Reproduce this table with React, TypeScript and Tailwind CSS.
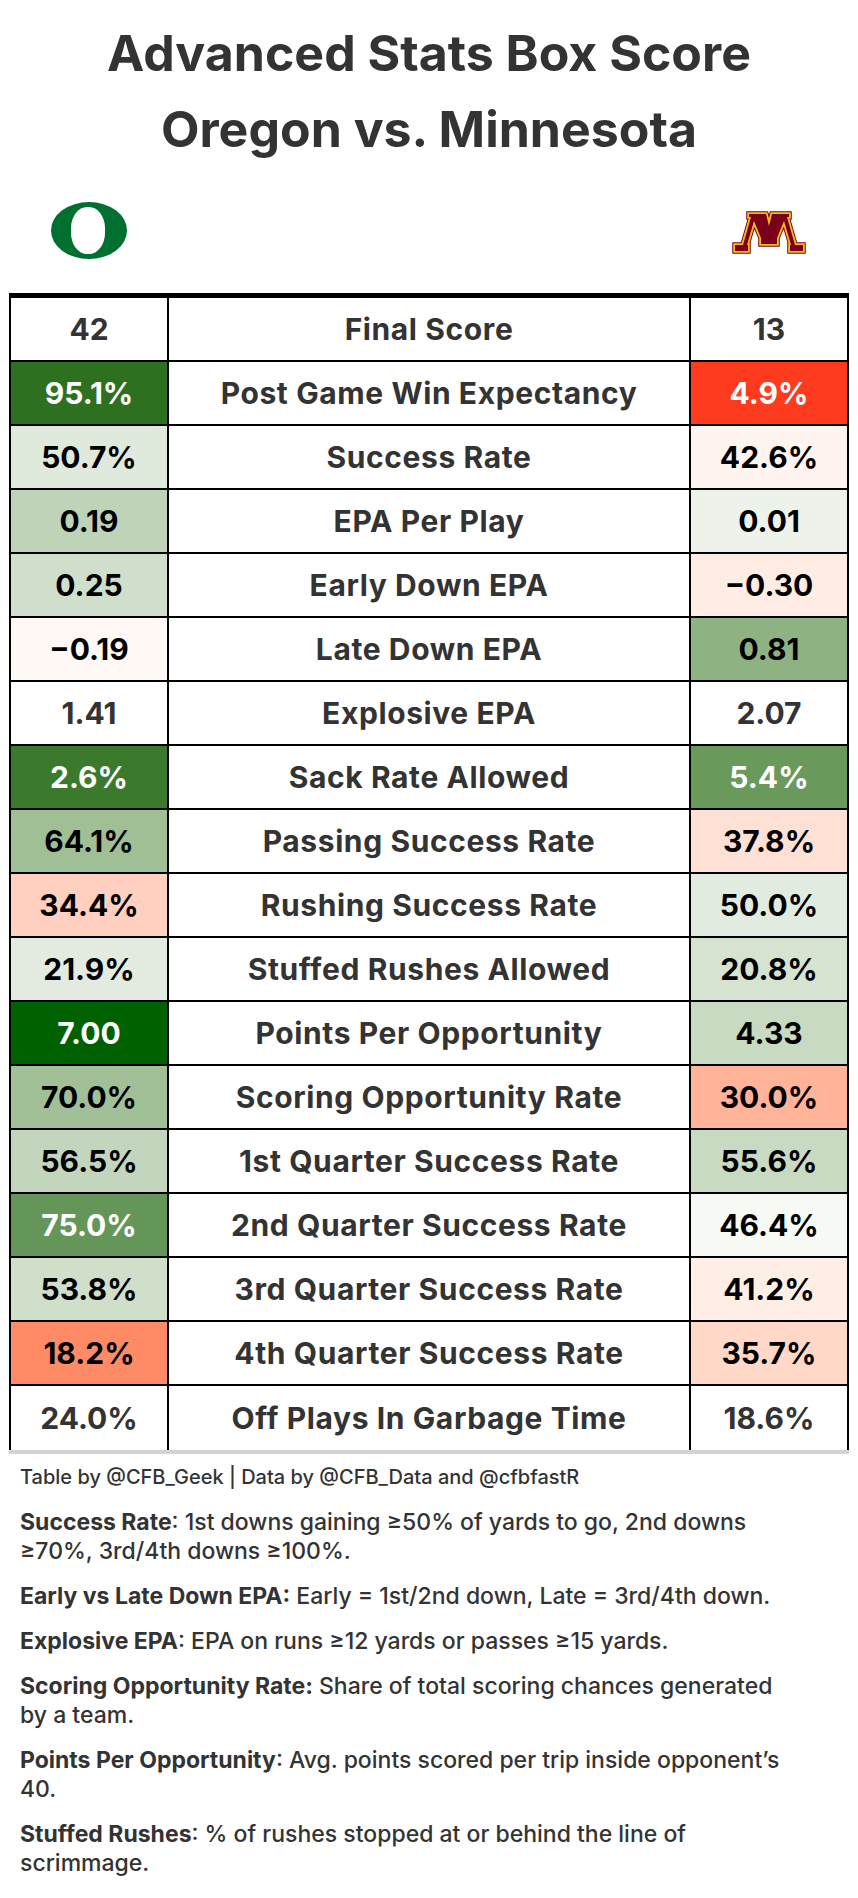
import React from "react";

type Row = {
  label: string;
  l: string;
  r: string;
  lc: string;
  rc: string;
};

const PLAIN = "bg-white text-[#333333]";
const DARK = "text-black";

const rows: Row[] = [
  { label: "Final Score", l: "42", r: "13", lc: PLAIN, rc: PLAIN },
  { label: "Post Game Win Expectancy", l: "95.1%", r: "4.9%", lc: "bg-[#2d7020] text-white", rc: "bg-[#ff3b1f] text-white" },
  { label: "Success Rate", l: "50.7%", r: "42.6%", lc: `bg-[#e0eadc] ${DARK}`, rc: `bg-[#fff4ef] ${DARK}` },
  { label: "EPA Per Play", l: "0.19", r: "0.01", lc: `bg-[#bfd3b9] ${DARK}`, rc: `bg-[#edf3ea] ${DARK}` },
  { label: "Early Down EPA", l: "0.25", r: "\u22120.30", lc: `bg-[#d0dfcb] ${DARK}`, rc: `bg-[#ffede5] ${DARK}` },
  { label: "Late Down EPA", l: "\u22120.19", r: "0.81", lc: `bg-[#fff8f5] ${DARK}`, rc: `bg-[#8fb283] ${DARK}` },
  { label: "Explosive EPA", l: "1.41", r: "2.07", lc: PLAIN, rc: PLAIN },
  { label: "Sack Rate Allowed", l: "2.6%", r: "5.4%", lc: "bg-[#3b7a2d] text-white", rc: "bg-[#69995b] text-white" },
  { label: "Passing Success Rate", l: "64.1%", r: "37.8%", lc: `bg-[#a0bf95] ${DARK}`, rc: `bg-[#ffe0d4] ${DARK}` },
  { label: "Rushing Success Rate", l: "34.4%", r: "50.0%", lc: `bg-[#ffd0bf] ${DARK}`, rc: `bg-[#e2ebdf] ${DARK}` },
  { label: "Stuffed Rushes Allowed", l: "21.9%", r: "20.8%", lc: `bg-[#e3ebe0] ${DARK}`, rc: `bg-[#d5e3d0] ${DARK}` },
  { label: "Points Per Opportunity", l: "7.00", r: "4.33", lc: "bg-[#006100] text-white", rc: `bg-[#c8dbc2] ${DARK}` },
  { label: "Scoring Opportunity Rate", l: "70.0%", r: "30.0%", lc: `bg-[#a2c097] ${DARK}`, rc: `bg-[#ffb399] ${DARK}` },
  { label: "1st Quarter Success Rate", l: "56.5%", r: "55.6%", lc: `bg-[#c3d6bd] ${DARK}`, rc: `bg-[#c8dbc2] ${DARK}` },
  { label: "2nd Quarter Success Rate", l: "75.0%", r: "46.4%", lc: "bg-[#659659] text-white", rc: `bg-[#f6f9f4] ${DARK}` },
  { label: "3rd Quarter Success Rate", l: "53.8%", r: "41.2%", lc: `bg-[#cfdfca] ${DARK}`, rc: `bg-[#ffeee6] ${DARK}` },
  { label: "4th Quarter Success Rate", l: "18.2%", r: "35.7%", lc: `bg-[#ff8b66] ${DARK}`, rc: `bg-[#ffd8c8] ${DARK}` },
  { label: "Off Plays In Garbage Time", l: "24.0%", r: "18.6%", lc: PLAIN, rc: PLAIN },
];

const notes: { bold: string; text: React.ReactNode }[] = [
  {
    bold: "Success Rate",
    text: (
      <>
        : 1st downs gaining ≥50% of yards to go, 2nd downs
        <br />
        ≥70%, 3rd/4th downs ≥100%.
      </>
    ),
  },
  { bold: "Early vs Late Down EPA:", text: " Early = 1st/2nd down, Late = 3rd/4th down." },
  { bold: "Explosive EPA", text: ": EPA on runs ≥12 yards or passes ≥15 yards." },
  {
    bold: "Scoring Opportunity Rate:",
    text: (
      <>
        {" "}Share of total scoring chances generated
        <br />
        by a team.
      </>
    ),
  },
  {
    bold: "Points Per Opportunity",
    text: (
      <>
        : Avg. points scored per trip inside opponent’s
        <br />
        40.
      </>
    ),
  },
  {
    bold: "Stuffed Rushes",
    text: (
      <>
        : % of rushes stopped at or behind the line of
        <br />
        scrimmage.
      </>
    ),
  },
];

function OregonLogo() {
  return (
    <svg width="76" height="57" viewBox="0 0 76 57">
      <ellipse cx="38" cy="28.5" rx="38" ry="28.5" fill="#007030" />
      <rect x="20" y="5" width="34" height="47" rx="16" ry="21" fill="#ffffff" />
    </svg>
  );
}

// block M, drawn as a core shape with a gold and maroon rim stroked around it
function MinnesotaLogo() {
  const pts =
    "17,3 34,3 37,15 40,3 57,3 57,6 55,6 63,34 71,34 71,40 58,40 58,34 59,34 52,10 45,27 45,33 29,33 29,27 22,10 15,34 16,34 16,40 3,40 3,34 11,34 19,6 17,6";
  return (
    <svg width="74" height="43" viewBox="0 0 74 43">
      <polygon points={pts} fill="#7a0019" stroke="#7a0019" strokeWidth="5.5" strokeLinejoin="miter" strokeMiterlimit="3" />
      <polygon points={pts} fill="#7a0019" stroke="#ffb71e" strokeWidth="3.6" strokeLinejoin="miter" strokeMiterlimit="3" />
      <polygon points={pts} fill="#7a0019" />
    </svg>
  );
}

export default function App() {
  return (
    <div className="w-[858px] min-h-[1898px] bg-white font-['Inter','Liberation_Sans',sans-serif] text-[#333333]">
      {/* Title */}
      <div className="pt-[15px] text-center text-[50px] font-bold leading-[76px]">
        <div>Advanced Stats Box Score</div>
        <div>Oregon vs. Minnesota</div>
      </div>

      {/* Logos */}
      <div className="flex h-[126px] items-center justify-between pl-[51px] pr-[52px]">
        <OregonLogo />
        <div className="mt-[5px]">
          <MinnesotaLogo />
        </div>
      </div>

      {/* Table */}
      <div className="ml-[9px] w-[840px] border-x-2 border-t-[5px] border-black">
        {rows.map((row, i) => (
          <div
            key={row.label}
            className={`flex h-[64px] text-[30px] font-bold ${i < rows.length - 1 ? "border-b-2 border-black" : ""}`}
          >
            <div className={`flex w-[158px] items-center justify-center border-r-2 border-black ${row.lc}`}>
              {row.l}
            </div>
            <div className="flex w-[522px] items-center justify-center border-r-2 border-black bg-white text-[#333333] tracking-[0.6px]">
              {row.label}
            </div>
            <div className={`flex w-[156px] items-center justify-center ${row.rc}`}>{row.r}</div>
          </div>
        ))}
      </div>
      <div className="ml-[9px] h-[4px] w-[840px] bg-[#d3d3d3]" />

      {/* Footnotes */}
      <div className="pl-[20px] pt-[9px] pb-[20px] font-medium leading-[29px] text-[#333333]">
        <p className="text-[20px]">Table by @CFB_Geek | Data by @CFB_Data and @cfbfastR</p>
        {notes.map((n) => (
          <p key={n.bold} className="mt-[16px] whitespace-nowrap text-[23px]">
            <span className="font-bold">{n.bold}</span>
            {n.text}
          </p>
        ))}
      </div>
    </div>
  );
}
